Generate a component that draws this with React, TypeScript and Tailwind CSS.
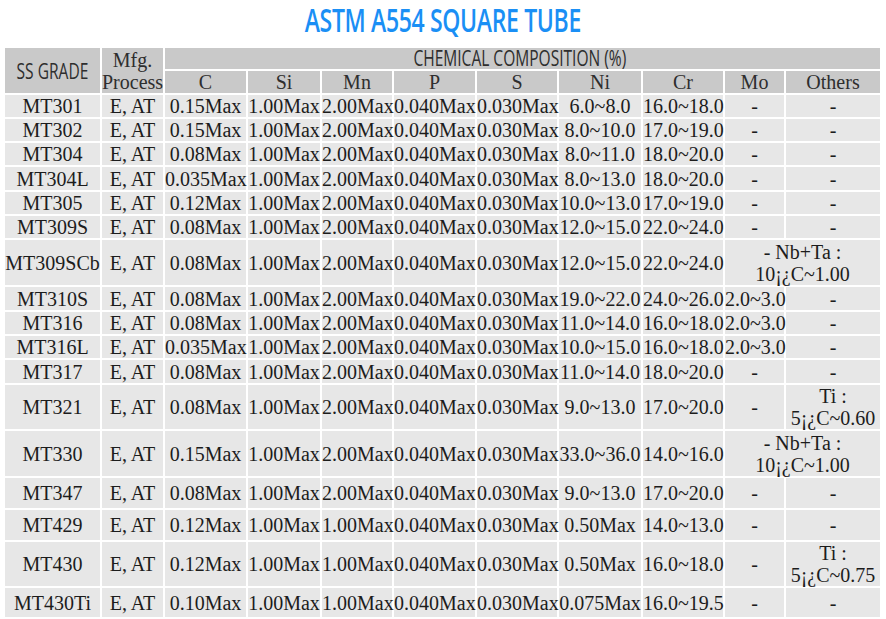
import React from "react";

type Row = {
  g: string;
  c: string;
  si: string;
  mn: string;
  p: string;
  s: string;
  ni: string;
  cr: string;
  mo: string;
  ot: string[];
  merge?: boolean;
  h: string;
};

const rows: Row[] = [
  { g: "MT301", c: "0.15Max", si: "1.00Max", mn: "2.00Max", p: "0.040Max", s: "0.030Max", ni: "6.0~8.0", cr: "16.0~18.0", mo: "-", ot: ["-"], h: "h-[24px]" },
  { g: "MT302", c: "0.15Max", si: "1.00Max", mn: "2.00Max", p: "0.040Max", s: "0.030Max", ni: "8.0~10.0", cr: "17.0~19.0", mo: "-", ot: ["-"], h: "h-[24px]" },
  { g: "MT304", c: "0.08Max", si: "1.00Max", mn: "2.00Max", p: "0.040Max", s: "0.030Max", ni: "8.0~11.0", cr: "18.0~20.0", mo: "-", ot: ["-"], h: "h-[24px]" },
  { g: "MT304L", c: "0.035Max", si: "1.00Max", mn: "2.00Max", p: "0.040Max", s: "0.030Max", ni: "8.0~13.0", cr: "18.0~20.0", mo: "-", ot: ["-"], h: "h-[25px]" },
  { g: "MT305", c: "0.12Max", si: "1.00Max", mn: "2.00Max", p: "0.040Max", s: "0.030Max", ni: "10.0~13.0", cr: "17.0~19.0", mo: "-", ot: ["-"], h: "h-[24px]" },
  { g: "MT309S", c: "0.08Max", si: "1.00Max", mn: "2.00Max", p: "0.040Max", s: "0.030Max", ni: "12.0~15.0", cr: "22.0~24.0", mo: "-", ot: ["-"], h: "h-[24px]" },
  { g: "MT309SCb", c: "0.08Max", si: "1.00Max", mn: "2.00Max", p: "0.040Max", s: "0.030Max", ni: "12.0~15.0", cr: "22.0~24.0", mo: "", ot: ["- Nb+Ta :", "10¡¿C~1.00"], merge: true, h: "h-[47px]" },
  { g: "MT310S", c: "0.08Max", si: "1.00Max", mn: "2.00Max", p: "0.040Max", s: "0.030Max", ni: "19.0~22.0", cr: "24.0~26.0", mo: "2.0~3.0", ot: ["-"], h: "h-[25px]" },
  { g: "MT316", c: "0.08Max", si: "1.00Max", mn: "2.00Max", p: "0.040Max", s: "0.030Max", ni: "11.0~14.0", cr: "16.0~18.0", mo: "2.0~3.0", ot: ["-"], h: "h-[24px]" },
  { g: "MT316L", c: "0.035Max", si: "1.00Max", mn: "2.00Max", p: "0.040Max", s: "0.030Max", ni: "10.0~15.0", cr: "16.0~18.0", mo: "2.0~3.0", ot: ["-"], h: "h-[24px]" },
  { g: "MT317", c: "0.08Max", si: "1.00Max", mn: "2.00Max", p: "0.040Max", s: "0.030Max", ni: "11.0~14.0", cr: "18.0~20.0", mo: "-", ot: ["-"], h: "h-[25px]" },
  { g: "MT321", c: "0.08Max", si: "1.00Max", mn: "2.00Max", p: "0.040Max", s: "0.030Max", ni: "9.0~13.0", cr: "17.0~20.0", mo: "-", ot: ["Ti :", "5¡¿C~0.60"], h: "h-[46px]" },
  { g: "MT330", c: "0.15Max", si: "1.00Max", mn: "2.00Max", p: "0.040Max", s: "0.030Max", ni: "33.0~36.0", cr: "14.0~16.0", mo: "", ot: ["- Nb+Ta :", "10¡¿C~1.00"], merge: true, h: "h-[47px]" },
  { g: "MT347", c: "0.08Max", si: "1.00Max", mn: "2.00Max", p: "0.040Max", s: "0.030Max", ni: "9.0~13.0", cr: "17.0~20.0", mo: "-", ot: ["-"], h: "h-[32px]" },
  { g: "MT429", c: "0.12Max", si: "1.00Max", mn: "1.00Max", p: "0.040Max", s: "0.030Max", ni: "0.50Max", cr: "14.0~13.0", mo: "-", ot: ["-"], h: "h-[32px]" },
  { g: "MT430", c: "0.12Max", si: "1.00Max", mn: "1.00Max", p: "0.040Max", s: "0.030Max", ni: "0.50Max", cr: "16.0~18.0", mo: "-", ot: ["Ti :", "5¡¿C~0.75"], h: "h-[45px]" },
  { g: "MT430Ti", c: "0.10Max", si: "1.00Max", mn: "1.00Max", p: "0.040Max", s: "0.030Max", ni: "0.075Max", cr: "16.0~19.5", mo: "-", ot: ["-"], h: "h-[31px]" },
];

const serif = "font-['Liberation_Serif','Times_New_Roman',serif]";
const td = "border-2 border-white bg-[#e7e7e7] p-0 text-center align-middle whitespace-nowrap";
const th = "border-2 border-white bg-[#c9c9c9] p-0 text-center align-middle font-normal whitespace-nowrap";

function Cond({ children, cls }: { children: React.ReactNode; cls: string }) {
  return (
    <div className="flex justify-center">
      <span className={"inline-block whitespace-nowrap font-['Open_Sans',sans-serif] " + cls}>{children}</span>
    </div>
  );
}

export default function App() {
  return (
    <div className="w-[886px] h-[619px] bg-white overflow-hidden">
      <div className="h-[46px] flex justify-center">
        <Cond cls="text-[32px] leading-[40px] font-semibold text-[#1a8ff5] scale-x-[0.72] tracking-[-0.5px]">
          ASTM A554 SQUARE TUBE
        </Cond>
      </div>
      <div className="pl-[3px]">
        <table className={"table-fixed border-collapse text-[20px] leading-[22px] text-[#1c1c1c] " + serif + " w-[877px]"}>
          <colgroup>
            <col className="w-[97px]" />
            <col className="w-[63px]" />
            <col className="w-[83px]" />
            <col className="w-[74px]" />
            <col className="w-[72px]" />
            <col className="w-[83px]" />
            <col className="w-[82px]" />
            <col className="w-[84px]" />
            <col className="w-[82px]" />
            <col className="w-[61px]" />
            <col className="w-[96px]" />
          </colgroup>
          <thead>
            <tr className="h-[23px]">
              <th rowSpan={2} className={th}>
                <Cond cls="text-[21px] leading-[24px] scale-x-[0.74] text-[#2e2e2e]">SS GRADE</Cond>
              </th>
              <th rowSpan={2} className={th + " text-[#2e2e2e] leading-[22px]"}>
                Mfg.
                <br />
                Process
              </th>
              <th colSpan={9} className={th}>
                <div className="pr-[6px]">
                  <Cond cls="text-[21px] leading-[21px] scale-x-[0.74] text-[#2e2e2e]">CHEMICAL COMPOSITION (%)</Cond>
                </div>
              </th>
            </tr>
            <tr className="h-[24px]">
              {["C", "Si", "Mn", "P", "S", "Ni", "Cr", "Mo", "Others"].map((t) => (
                <th key={t} className={th + " text-[#2e2e2e]"}>
                  {t}
                </th>
              ))}
            </tr>
          </thead>
          <tbody>
            {rows.map((r) => (
              <tr key={r.g} className={r.h}>
                <td className={td}>{r.g}</td>
                <td className={td}>E, AT</td>
                <td className={td}>{r.c}</td>
                <td className={td}>{r.si}</td>
                <td className={td}>{r.mn}</td>
                <td className={td}>{r.p}</td>
                <td className={td}>{r.s}</td>
                <td className={td}>{r.ni}</td>
                <td className={td}>{r.cr}</td>
                {r.merge ? (
                  <td colSpan={2} className={td}>
                    {r.ot[0]}
                    <br />
                    {r.ot[1]}
                  </td>
                ) : (
                  <>
                    <td className={td}>{r.mo}</td>
                    <td className={td}>
                      {r.ot.length > 1 ? (
                        <>
                          {r.ot[0]}
                          <br />
                          {r.ot[1]}
                        </>
                      ) : (
                        r.ot[0]
                      )}
                    </td>
                  </>
                )}
              </tr>
            ))}
          </tbody>
        </table>
      </div>
    </div>
  );
}
